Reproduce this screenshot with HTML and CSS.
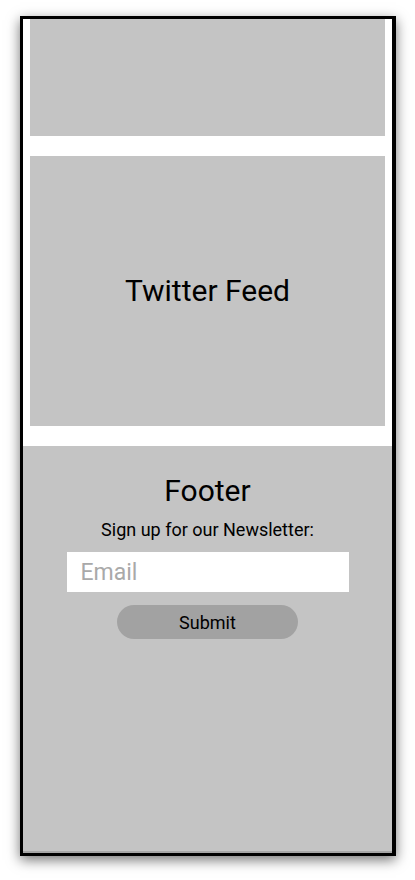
FILE: index.html
```html
<!DOCTYPE html>
<html lang="en">
<head>
<meta charset="utf-8">
<title>Mobile layout</title>
<link rel="stylesheet" href="styles.css">
</head>
<body>
<div class="frame">
  <main class="content">
    <section class="block block-top"></section>
    <section class="block block-twitter">
      <span class="block-label">Twitter Feed</span>
    </section>
  </main>
  <footer class="footer">
    <h2 class="footer-title">Footer</h2>
    <p class="footer-text">Sign up for our Newsletter:</p>
    <form class="footer-form">
      <input class="email-input" type="email" placeholder="Email">
      <button class="submit-btn" type="button">Submit</button>
    </form>
  </footer>
</div>
</body>
</html>
```

FILE: styles.css
```css
html, body {
  margin: 0;
  padding: 0;
  background: #ffffff;
}

body {
  padding: 16px 0 24px 20px;
  min-height: 880px;
  box-sizing: border-box;
  font-family: Roboto, "Liberation Sans", Arial, sans-serif;
  color: #000;
}

.frame {
  box-sizing: border-box;
  width: 376px;
  height: 840px;
  border: 3px solid #000;
  border-right-width: 4px;
  background: #fff;
  display: flex;
  flex-direction: column;
  box-shadow: 0 4px 12px rgba(0, 0, 0, 0.55);
  overflow: hidden;
}

.content {
  display: flex;
  flex-direction: column;
  gap: 20px;
  padding: 0 7px 20px;
}

.block {
  background: #c4c4c4;
}

.block-top {
  height: 117px;
}

.block-twitter {
  height: 270px;
  display: flex;
  align-items: center;
  justify-content: center;
}

.block-label {
  font-size: 30px;
  line-height: 36px;
}

.footer {
  flex: 1;
  background: #c4c4c4;
  display: flex;
  flex-direction: column;
  align-items: center;
  padding-top: 27px;
  border-bottom: 2px solid #a6a6a6;
}

.footer-title {
  margin: 0;
  font-size: 30px;
  line-height: 36px;
  font-weight: 400;
}

.footer-text {
  margin: 10px 0 0;
  font-size: 18px;
  line-height: 21px;
}

.footer-form {
  margin-top: 12px;
  display: flex;
  flex-direction: column;
  align-items: center;
  gap: 13px;
}

.email-input {
  box-sizing: border-box;
  width: 282px;
  height: 40px;
  border: none;
  outline: none;
  padding: 0 14px;
  background: #fff;
  font-family: Roboto, "Liberation Sans", Arial, sans-serif;
  font-size: 23px;
  color: #000;
}

.email-input::placeholder {
  color: #a9a9a9;
}

.submit-btn {
  width: 181px;
  height: 34px;
  border: none;
  border-radius: 17px;
  background: #a2a2a2;
  font-family: Roboto, "Liberation Sans", Arial, sans-serif;
  font-size: 18px;
  color: #000;
  padding: 0;
}
```
